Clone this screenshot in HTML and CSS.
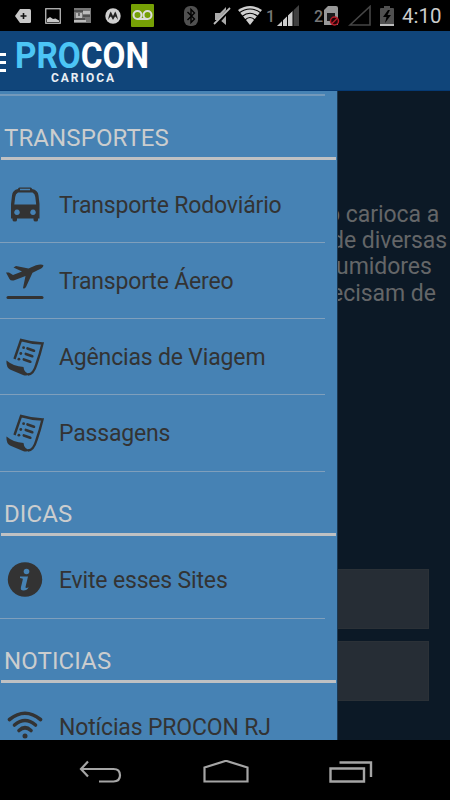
FILE: index.html
```
<!DOCTYPE html>
<html lang="pt-BR">
<head>
    <meta charset="UTF-8">
    <meta name="viewport" content="width=device-width, initial-scale=1.0">
    <title>PROCON Carioca</title>
    <link rel="stylesheet" href="styles.css">
</head>
<body>
    <!-- Shared menu icon -->
    <svg class="defs">
        <symbol id="icon-bill" viewBox="0 0 38 38">
            <path d="M8.500 21L15 2Q26 5.300 36.500 5.500Q34 16 30.500 26Q27.500 36.500 22 36.500" fill="none" stroke="#333" stroke-width="2.400"/>
            <path d="M.5 22.500Q7 28 17.500 29Q18 34.500 23.500 36Q21 38.500 17 37L4 31.500Q0 29 .5 22.500Z" fill="#333"/>
            <path d="M21.500 10.400l6.500 2.300M19.800 15.900l6.500 2.300M17.800 21.400l6.500 2.300" stroke="#333" stroke-width="2.600" stroke-linecap="round"/>
            <circle cx="17.600" cy="9.700" r="1.400" fill="#333"/>
            <circle cx="14.800" cy="15.500" r="1.400" fill="#333"/>
            <circle cx="12.900" cy="21.200" r="1.400" fill="#333"/>
        </symbol>
    </svg>

    <div class="status-bar">
        <svg class="st-tag" width="16" height="14" viewBox="0 0 16 14"><path d="M5 0H14.500Q16 0 16 1.500V12.500Q16 14 14.500 14H5L0 7Z" fill="#c8c8c8"/><path d="M8.500 4V10M5.500 7H11.500" stroke="#111" stroke-width="1.600"/></svg>
        <svg class="st-image" width="16" height="16" viewBox="0 0 16 16"><rect x=".75" y=".75" width="14.500" height="14.500" fill="none" stroke="#c8c8c8" stroke-width="1.200"/><path d="M2 14V11L5 9L8 11L10.500 10.500L14 12.500V14Z" fill="#c8c8c8"/></svg>
        <svg class="st-card" width="17" height="15" viewBox="0 0 17 15"><path d="M0 0H17V15H0Z" fill="#777"/><path d="M2 5H8V10H2ZM9 3H16V6H9ZM0 12H12V14H0Z" fill="#bbb"/><path d="M0 3H9M5 5V8M9 8H16M0 11H11" stroke="#444" stroke-width="1.300"/></svg>
        <svg class="st-moto" width="16" height="16" viewBox="0 0 16 16"><circle cx="8" cy="8" r="7.700" fill="#d0d0d0"/><path d="M3 12Q4 6 5.800 3.500L8 8L10.200 3.500Q12 6 13 12Q11 8.500 10 8.500L8 12L6 8.500Q5 8.500 3 12Z" fill="#222"/></svg>
        <svg class="st-voicemail" width="23" height="23" viewBox="0 0 23 23"><rect width="23" height="23" rx="1" fill="#76a005"/><g fill="none" stroke="#ddd" stroke-width="2"><circle cx="6.500" cy="11" r="4"/><circle cx="16.500" cy="11" r="4"/><path d="M6 15H17"/></g></svg>
        <svg class="st-bluetooth" width="14" height="20" viewBox="0 0 14 20"><rect width="14" height="20" rx="6" fill="#505050"/><path d="M3.500 6L10.500 13L7 16.500V3.500L10.500 7L3.500 14" fill="none" stroke="#000" stroke-width="1.400"/></svg>
        <svg class="st-mute" width="18" height="20" viewBox="0 0 18 20"><path d="M2 7H7L13 1V19L7 14H2Z" fill="#aaa"/><path d="M2 19.500L17 2.500" stroke="#000" stroke-width="3.600"/><path d="M1 18L17 2" stroke="#bbb" stroke-width="1.800"/></svg>
        <svg class="st-wifi" width="24" height="19" viewBox="0 0 24 19"><path d="M0 4Q12 -4 24 4L12 19Z" fill="#cfcfcf"/><path d="M1 7Q12 -1 23 7M4 10.500Q12 4 20 10.500M7 14Q12 9 17 14" fill="none" stroke="#000" stroke-width="1.100"/></svg>
        <span class="sim-number sim-one">1</span>
        <svg class="st-signal" width="22" height="21" viewBox="0 0 22 21"><path d="M0 21L22 0V21Z" fill="#404040"/><path d="M0 21L16 5.700V21Z" fill="#ccc"/><path d="M5.500 15V21M10.500 10V21M16 5V21" stroke="#000" stroke-width="1"/></svg>
        <span class="sim-number sim-two">2</span>
        <svg class="st-sim" width="16" height="20" viewBox="0 0 16 20"><path d="M4 0H12Q14 0 14 2V19H0V4Z" fill="#999"/><rect x="3" y="7" width="8" height="8" fill="#1b1b1b"/><circle cx="10.500" cy="15" r="4" fill="#210306" stroke="#b51d29" stroke-width="1.500"/><path d="M7.500 12L13.500 18" stroke="#b51d29" stroke-width="1.500" transform="matrix(-1 0 0 1 21 0)"/></svg>
        <svg class="st-nosignal" width="23" height="21" viewBox="0 0 23 21"><path d="M2 20L22 1.500V20Z" fill="none" stroke="#464646" stroke-width="1.600"/></svg>
        <svg class="st-battery" width="14" height="20" viewBox="0 0 14 20"><path d="M0 3Q0 2 1 2H4V0H10V2H13Q14 2 14 3V20H0Z" fill="#505050"/><path d="M0 18H14V20H0Z" fill="#bbb"/><path d="M8 4L3 11H6.500L5 17L11 9H7.500L10 4Z" fill="#000"/></svg>
        <span class="clock">4:10</span>
    </div>

    <header class="app-bar">
        <span class="menu-button"></span>
        <div class="logo">
            <svg width="136" height="52" viewBox="0 -6 136 52">
                <text class="logo-name" x="0" y="31" textLength="134" lengthAdjust="spacingAndGlyphs"><tspan class="logo-pro">PRO</tspan>CON</text>
                <text class="logo-city" x="36" y="44.500" textLength="63">CARIOCA</text>
            </svg>
        </div>
    </header>

    <main class="screen">
        <nav class="drawer">
            <div class="drawer-top"></div>
            <h2>TRANSPORTES</h2>
            <ul>
                <li>
                    <svg class="icon" width="38" height="38" viewBox="0 0 38 38"><path fill="#333" fill-rule="evenodd" d="M12 3Q12 1.500 13.500 1.500H24.500Q26 1.500 26 3Q32 4 32.500 9.500L33.500 18V32.500H32V34Q32 35.500 30 35.500Q27.500 35.500 27.500 34V32.500H11V34Q11 35.500 9 35.500Q6.500 35.500 6.500 34V32.500H5V18L6 9.500Q6.500 4 12 3ZM14 2.800V4.300H24V2.800ZM12 6.500Q9.500 7.500 9.200 11L8.300 18.500H30.200L29.300 11Q29 7.500 26.500 6.500ZM11 23.500a2.800 2.800 0 1 0 .01 0ZM27 23.500a2.800 2.800 0 1 0 .01 0Z"/></svg>
                    <span>Transporte Rodoviário</span>
                </li>
                <li>
                    <svg class="icon" width="38" height="38" viewBox="0 -1 38 38"><path fill="#333" d="M0 9.500L3 9.500L7 12L16 8.500L7.500 4.500L10 3L22.500 5.500L30 2.300Q36 .5 37.500 2.500Q37 5 32 7L26.500 9.700L20 24Q18 26.500 17 25L19.500 13L9 17Q5 18.500 3.500 16Z"/><path d="M2 34.500H36" stroke="#333" stroke-width="3" stroke-linecap="round"/></svg>
                    <span>Transporte Áereo</span>
                </li>
                <li>
                    <svg class="icon" width="38" height="38"><use href="#icon-bill"/></svg>
                    <span>Agências de Viagem</span>
                </li>
                <li>
                    <svg class="icon" width="38" height="38"><use href="#icon-bill"/></svg>
                    <span>Passagens</span>
                </li>
            </ul>
            <h2>DICAS</h2>
            <ul>
                <li>
                    <svg class="icon" width="38" height="38" viewBox="0 0 38 38"><circle cx="19" cy="18.500" r="17.200" fill="#333"/><circle cx="20.500" cy="10.500" r="2.800" fill="#4682b4"/><path d="M14 15.500H22L19.500 26Q19.300 28 22.700 26.300Q21 29.500 17.500 29.500Q14 29.500 15 26L16.800 18.500Q17 17 14 17Z" fill="#4682b4"/></svg>
                    <span>Evite esses Sites</span>
                </li>
            </ul>
            <h2>NOTICIAS</h2>
            <ul>
                <li>
                    <svg class="icon" width="38" height="38" viewBox="0 0 38 38"><g fill="none" stroke="#333" stroke-width="3.600" stroke-linecap="round"><path d="M3.500 11.500Q19 -1 34.500 11.500"/><path d="M8.500 17Q19 8 29.500 17"/><path d="M13 22.500Q19 17 25 22.500"/></g><circle cx="19" cy="28" r="2.500" fill="#333"/></svg>
                    <span>Notícias PROCON RJ</span>
                </li>
            </ul>
        </nav>

        <section class="content">
            <p>
                <span class="line shift-left">o carioca a</span>
                <span class="line">de diversas</span>
                <span class="line shift-right">umidores</span>
                <span class="line">ecisam de</span>
            </p>
            <div class="field"></div>
            <div class="field"></div>
        </section>
    </main>

    <footer class="nav-bar">
        <svg width="44" height="26" viewBox="0 0 44 26"><path d="M9 1.500L2 9L9 16.500M2 9H34.500Q41 9 41 15.300Q41 21.500 34.500 21.500H20" fill="none" stroke="#a5a5a5" stroke-width="2.200"/></svg>
        <svg width="46" height="26" viewBox="0 0 46 26"><path d="M1.500 21.500V7.500L23 .8L44.500 7.500V21.500Z" fill="none" stroke="#a5a5a5" stroke-width="2.200"/></svg>
        <svg width="44" height="26" viewBox="0 0 44 26"><path d="M1.500 8.500H35V21.500H1.500ZM10.500 2.500H42V17" fill="none" stroke="#a5a5a5" stroke-width="2.400"/></svg>
    </footer>
</body>
</html>
```
FILE: styles.css
```
* {
    box-sizing: border-box;
}

body {
    margin: 0;
    width: 450px;
    height: 800px;
    overflow: hidden;
    display: flex;
    flex-direction: column;
    background-color: #000;
    font-family: Roboto, "Liberation Sans", sans-serif;
}

.defs {
    display: none;
}

/* Android status bar */
.status-bar {
    height: 31px;
    display: flex;
    align-items: center;
    flex-shrink: 0;
}

.status-bar svg,
.status-bar span {
    flex-shrink: 0;
}

.st-tag { margin-left: 15px; }
.st-image { margin-left: 14px; }
.st-card { margin-left: 13px; }
.st-moto { margin-left: 14px; }
.st-voicemail { margin-left: 10px; }
.st-bluetooth { margin-left: 30px; }
.st-mute { margin-left: 15px; }
.st-wifi { margin-left: 7px; }
.st-signal { margin-left: 3px; }
.st-sim { margin-left: 2px; }
.st-nosignal { margin-left: 8px; }
.st-battery { margin-left: 9px; }

.sim-number {
    width: 8px;
    color: #777;
    font-size: 16px;
    font-weight: 500;
    line-height: 18px;
    padding-top: 3px;
}

.sim-one {
    margin-left: 4px;
}

.sim-two {
    margin-left: 15px;
}

.clock {
    margin-left: 8px;
    padding-top: 2px;
    color: #ccc;
    font-size: 20.5px;
    line-height: 29px;
}

/* App bar */
.app-bar {
    height: 60px;
    flex-shrink: 0;
    display: flex;
    background-color: #10457a;
    border-bottom: 1px solid #063a74;
}

.menu-button {
    width: 6px;
    height: 19px;
    margin-top: 22px;
    border-top: 3px solid #fff;
    border-bottom: 3px solid #fff;
    background: linear-gradient(#fff, #fff) center / 100% 3px no-repeat;
}

.logo {
    margin-left: 9px;
}

.logo svg {
    overflow: visible;
}

.logo-name {
    font-size: 36.5px;
    font-weight: 700;
    fill: #fff;
}

.logo-name .logo-pro {
    fill: #4cc5f5;
}

.logo-city {
    font-size: 12px;
    font-weight: 700;
    fill: #e8eef4;
}

.screen {
    height: 649px;
    flex-shrink: 0;
    display: flex;
    overflow: hidden;
    background-color: #0c1926;
}

/* Sliding menu */
.drawer {
    width: 338px;
    flex-shrink: 0;
    background-color: #4682b4;
    border-right: 1px solid #1d3851;
}

.drawer-top {
    width: 325px;
    height: 5px;
    border-bottom: 2px solid #7399bb;
}

.drawer h2 {
    height: 64px;
    margin: 0 1px 7px;
    padding: 28px 0 0 3px;
    border-bottom: 3px solid #bfc1c3;
    color: #cbcdce;
    font-size: 24px;
    font-weight: 400;
    letter-spacing: 0.1px;
    line-height: 28px;
}

.drawer ul {
    margin: 0;
    padding: 0;
    list-style: none;
}

.drawer li {
    width: 325px;
    height: 76.15px;
    display: flex;
    align-items: center;
    padding-left: 6px;
    border-bottom: 1px solid #7f9fbc;
    color: #333;
    font-size: 23px;
    letter-spacing: -0.17px;
    white-space: nowrap;
}

.drawer li span {
    padding-top: 1px;
}

.icon {
    margin-right: 15px;
    flex-shrink: 0;
}

/* Page behind the menu */
.content {
    flex: 1;
    min-width: 0;
}

.content p {
    height: 367px;
    margin: 111px 0 0 -7px;
    color: #646668;
    font-size: 23px;
    letter-spacing: -0.05px;
    line-height: 26.2px;
    white-space: nowrap;
    clip-path: inset(0 0 0 7px);
}

.line {
    display: block;
}

.shift-left {
    margin-left: -4px;
}

.shift-right {
    margin-left: 5px;
}

.field {
    width: 91px;
    height: 60px;
    margin-bottom: 12px;
    background-color: #262d35;
    border: 1px solid #2b3137;
    border-left: none;
}

/* System buttons */
.nav-bar {
    height: 60px;
    flex-shrink: 0;
    display: flex;
    justify-content: space-between;
    padding: 20px 77px 0 79px;
}
```
